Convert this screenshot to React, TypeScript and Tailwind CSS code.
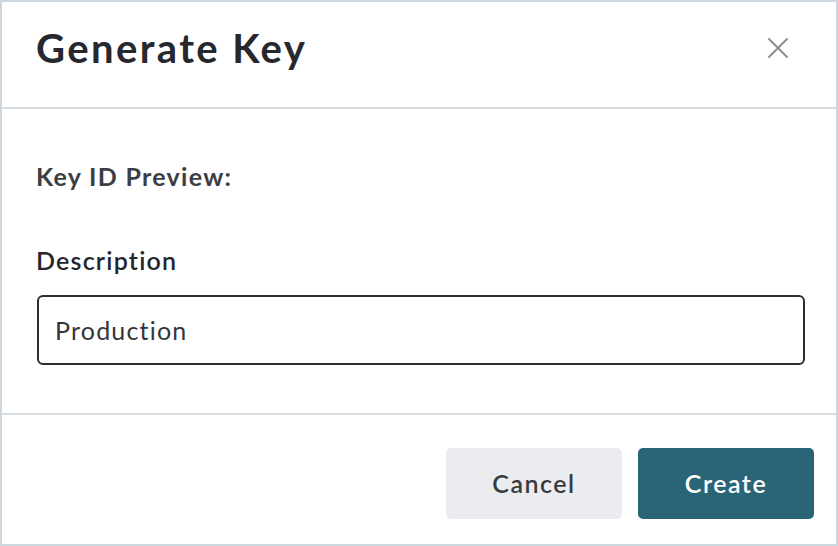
export default function App() {
  return (
    <div className="w-[838px] h-[546px] bg-white border-2 border-[#cdd7de] flex flex-col font-['Lato','Noto_Sans',sans-serif]">
      {/* Header */}
      <div className="h-[107px] flex items-start justify-between pl-[34px] pr-[48px] pt-[26px] border-b-2 border-[#d5dde3]">
        <h1 className="text-[40px] font-bold text-[#26282d] leading-none tracking-[2.4px]">Generate Key</h1>
        <button className="mt-[10px] text-[#8c8f96]">
          <svg width="20" height="20" viewBox="0 0 20 20" fill="none" stroke="currentColor" strokeWidth="2" strokeLinecap="round">
            <path d="M1 1L19 19M19 1L1 19" />
          </svg>
        </button>
      </div>

      {/* Body */}
      <div className="h-[306px] pl-[35px] pr-[31px] pt-[55px] border-b-2 border-[#d5dde3]">
        <p className="-ml-[1px] text-[25px] font-bold text-[#3c3e44] leading-none tracking-[1.3px]">Key ID Preview:</p>
        <label className="block -ml-[1px] mt-[59px] text-[25px] font-semibold text-[#24262b] leading-none tracking-[1.2px]">
          Description
        </label>
        <input
          type="text"
          defaultValue="Production"
          className="mt-[22px] w-full h-[70px] px-[16px] border-2 border-[#2b2d31] rounded-[6px] text-[25px] text-[#333539] tracking-[1.2px] outline-none"
        />
      </div>

      {/* Footer */}
      <div className="flex-1 flex items-start justify-end gap-[16px] pr-[22px] pt-[33px]">
        <button className="w-[176px] h-[71px] rounded-[5px] bg-[#ebecf0] text-[25px] font-semibold text-[#393b40] tracking-[1.5px]">
          Cancel
        </button>
        <button className="w-[176px] h-[71px] rounded-[5px] bg-[#2a6577] text-[25px] font-semibold text-white tracking-[1.5px]">
          Create
        </button>
      </div>
    </div>
  );
}
